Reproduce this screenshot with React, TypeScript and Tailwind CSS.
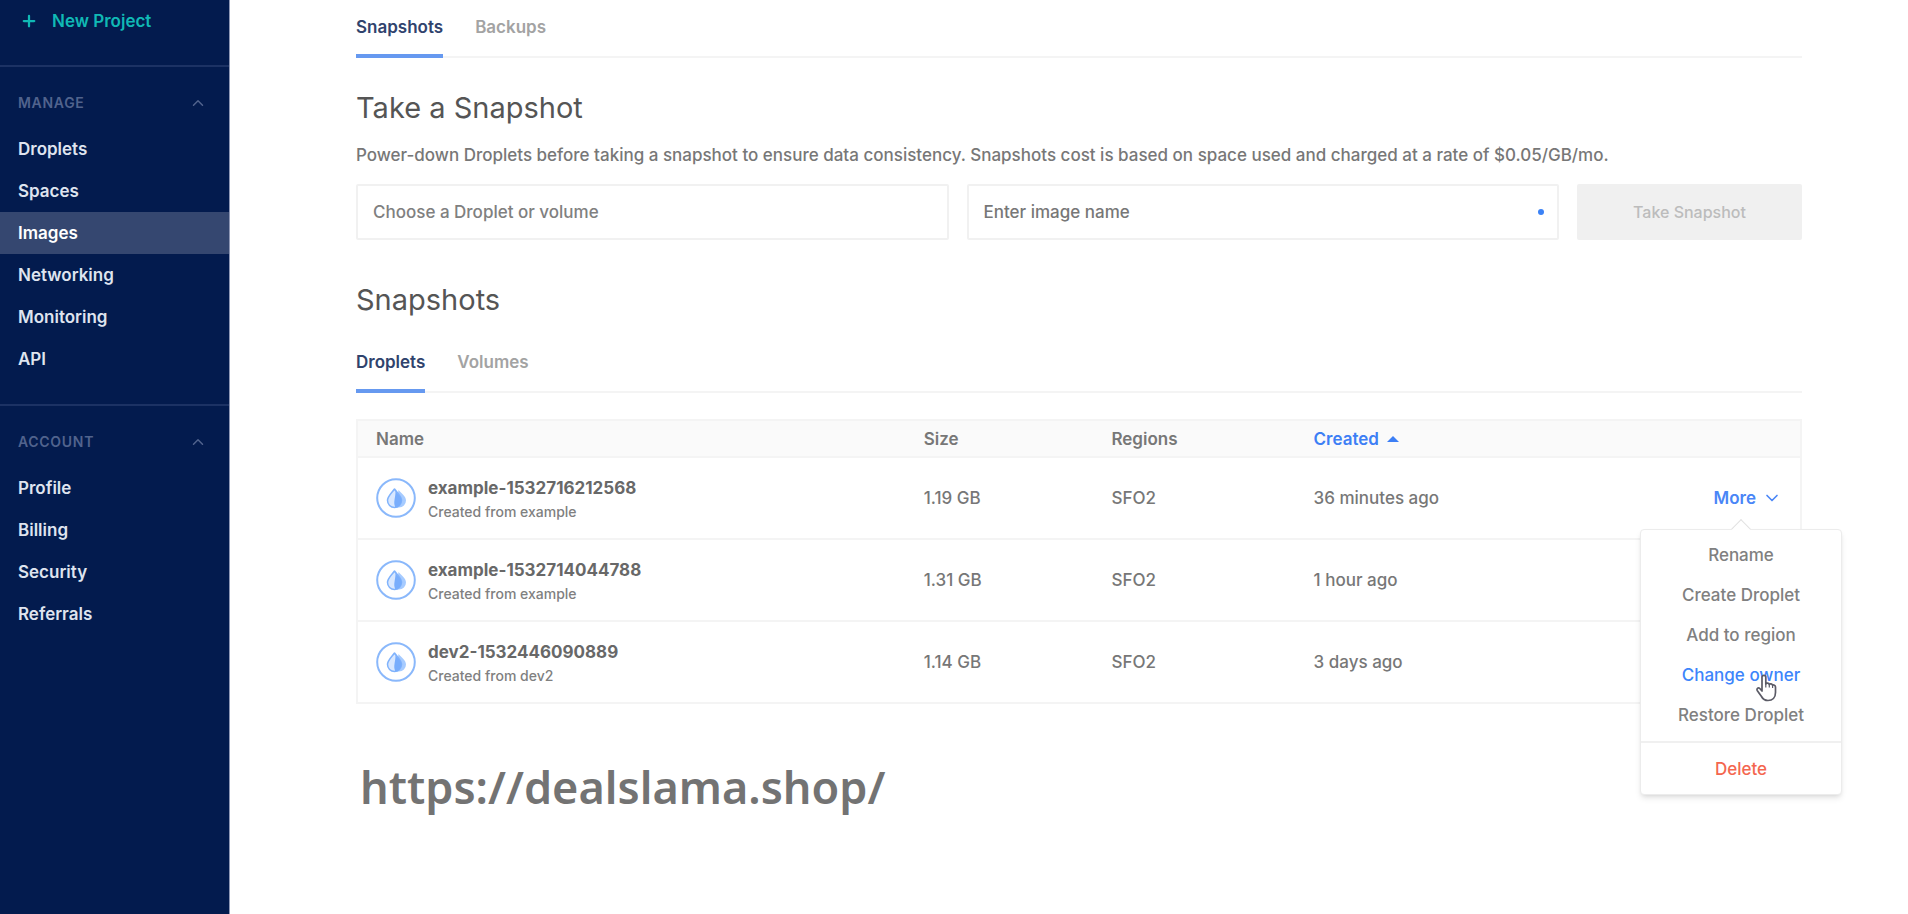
import React, { useState } from 'react';
import { ChevronDown, ChevronUp, Plus } from 'lucide-react';

interface Snapshot {
    name: string;
    source: string;
    size: string;
    region: string;
    created: string;
}

interface TabsProps {
    label: string;
    tabs: string[];
    className: string;
}

interface SectionProps {
    title: string;
    items: string[];
    active?: string;
}

const snapshots: Snapshot[] = [
    { name: 'example-1532716212568', source: 'example', size: '1.19 GB', region: 'SFO2', created: '36 minutes ago' },
    { name: 'example-1532714044788', source: 'example', size: '1.31 GB', region: 'SFO2', created: '1 hour ago' },
    { name: 'dev2-1532446090889', source: 'dev2', size: '1.14 GB', region: 'SFO2', created: '3 days ago' }
];

const menuItems = ['Rename', 'Create Droplet', 'Add to region', 'Change owner', 'Restore Droplet'];

const DropletIcon = () => (
    <svg width="40" height="40" viewBox="0 0 40 40" fill="none" aria-hidden="true" className="shrink-0">
        <circle cx="20" cy="20" r="18.8" stroke="#8ab8fb" strokeWidth="2" />
        <path d="M22.500 12c3 3.200 7.500 6.500 7.500 10.500a7 7 0 0 1-7 7h-3Z" fill="#a6cbff" />
        <path d="M18.500 11c-2.700 3.900-7 7.300-7 11.500a7 7 0 0 0 14 0c0-4.200-4.300-7.600-7-11.500Z" fill="#d9e8ff" stroke="#80b3fc" strokeWidth="1.500" strokeLinejoin="round" />
        <path d="M19.500 13c2.700 3.500 6 6 6 9.600a6.800 6.800 0 0 1-6.200 6.800c-1-2.500-1.300-4.400-.8-7.400.4-3 1-5 1-9Z" fill="#78adfc" />
    </svg>
);

const HandCursor = () => (
    <svg
        width="24"
        height="30"
        viewBox="0 0 24 30"
        aria-hidden="true"
        className="pointer-events-none absolute left-[113px] top-[143px]"
    >
        <path
            d="M8 18V4.200a1.900 1.900 0 0 1 3.800 0V11c.5-1.300 3.200-1.200 3.500.500.700-1 3-.8 3.300.8.900-.7 2.900-.2 2.900 1.700v5.500c0 5-3 8-7.500 8-3.500 0-5.200-1.500-6.500-4L3.200 17.500c-1-2 1.200-3.300 2.600-2Z"
            fill="#ffffff"
            stroke="#5b5b66"
            strokeWidth="1.700"
            strokeLinejoin="round"
        />
        <path d="M11.800 10.500v4M15.300 11.500v3M18.600 12.500v2.500" stroke="#5b5b66" strokeWidth="1.200" />
    </svg>
);

const Tabs: React.FC<TabsProps> = ({ label, tabs, className }) => {
    const [current, setCurrent] = useState(tabs[0]);

    return (
        <nav aria-label={label} className={`flex gap-8 border-b-2 border-[#f4f4f4] ${className}`}>
            {tabs.map(tab => (
                <button
                    key={tab}
                    onClick={() => setCurrent(tab)}
                    className={`-mb-[2px] border-b-4 pb-[15px] text-[17px] leading-6 font-semibold ${tab === current
                            ? 'border-[#6699f0] text-[#30436d]'
                            : 'border-transparent text-[#a3a3a3]'
                        }`}
                >
                    {tab}
                </button>
            ))}
        </nav>
    );
};

const SidebarSection: React.FC<SectionProps> = ({ title, items, active }) => (
    <section className="border-t-2 border-[#1c3264] pt-6 pb-6">
        <button className="flex h-6 w-full items-center justify-between pr-[22px] pl-[18px] text-sm font-semibold tracking-wider text-[#51638d]">
            {title}
            <ChevronUp size={18} strokeWidth={2} />
        </button>
        <ul className="mt-[13px]">
            {items.map(item => (
                <li key={item}>
                    <a
                        href="#"
                        className={`flex h-[42px] items-center pl-[18px] text-[17px] font-semibold ${item === active ? 'bg-[#354770] text-white' : 'text-[#dfe4ef]'
                            }`}
                    >
                        {item}
                    </a>
                </li>
            ))}
        </ul>
    </section>
);

const MoreMenu = () => (
    <div className="absolute top-[71px] right-[-42px] z-10 w-[202px] rounded-sm border border-[#ececec] bg-white text-center font-medium text-[#808080] shadow-md">
        <span className="absolute -top-[8px] left-1/2 -ml-[7px] h-[14px] w-[14px] rotate-45 border-t border-l border-[#e2e2e2] bg-white" />
        <ul className="pt-[5px] pb-[6px]">
            {menuItems.map(item => (
                <li key={item}>
                    <button className={`h-10 w-full ${item === 'Change owner' ? 'text-[#3d85fb]' : ''}`}>{item}</button>
                </li>
            ))}
        </ul>
        <div className="border-t-2 border-[#f0f0f0]">
            <button className="h-[51px] w-full text-[#f4664f]">Delete</button>
        </div>
        <HandCursor />
    </div>
);

const App: React.FC = () => {
    const [menuRow, setMenuRow] = useState<number | null>(0);

    return (
        <div className="flex min-h-screen bg-white font-['Inter',sans-serif] text-[17px] leading-6 text-[#777777]">
            <aside className="w-[230px] shrink-0 border-r border-[#8f98b5] bg-[#031b4e]">
                <button className="flex h-[65px] w-full items-start gap-[14px] pt-[9px] pl-5 font-semibold text-[#10b9b5]">
                    <Plus size={18} strokeWidth={3} className="mt-[3px]" />
                    New Project
                </button>
                <SidebarSection
                    title="MANAGE"
                    items={['Droplets', 'Spaces', 'Images', 'Networking', 'Monitoring', 'API']}
                    active="Images"
                />
                <SidebarSection title="ACCOUNT" items={['Profile', 'Billing', 'Security', 'Referrals']} />
            </aside>

            <main className="min-w-0 flex-1 pr-[106px] pl-[126px]">
                <Tabs label="Images" tabs={['Snapshots', 'Backups']} className="pt-[15px]" />

                <h2 className="mt-8 text-[29px] leading-9 text-[#555555]">Take a Snapshot</h2>
                <p className="mt-[17px] font-medium">
                    Power-down Droplets before taking a snapshot to ensure data consistency. Snapshots cost is based on space used and charged at a rate of $0.05/GB/mo.
                </p>

                <form className="mt-[17px] flex gap-[18px]" onSubmit={e => e.preventDefault()}>
                    <div className="min-w-0 flex-1">
                        <select
                            aria-label="Choose a Droplet or volume"
                            className="h-14 w-full appearance-none rounded-xs border-2 border-[#f1f1f1] bg-white px-[15px] font-medium text-[#808080]"
                        >
                            <option>Choose a Droplet or volume</option>
                        </select>
                    </div>
                    <div className="relative min-w-0 flex-1">
                        <input
                            aria-label="Enter image name"
                            placeholder="Enter image name"
                            className="h-14 w-full rounded-xs border-2 border-[#f1f1f1] px-[15px] font-medium placeholder:text-[#777777]"
                        />
                        <span className="absolute top-[25px] right-[15px] h-[6px] w-[6px] rounded-full bg-[#3b82f6]" />
                    </div>
                    <button disabled className="h-14 w-[225px] rounded-xs bg-[#f0f0f0] text-base font-medium text-[#bcbcbc]">
                        Take Snapshot
                    </button>
                </form>

                <h2 className="mt-[42px] text-[29px] leading-9 text-[#555555]">Snapshots</h2>
                <Tabs label="Snapshot type" tabs={['Droplets', 'Volumes']} className="pt-8" />

                <table className="mt-[26px] w-full table-fixed border-collapse border-2 border-[#f4f4f4] text-left font-medium">
                    <colgroup>
                        <col className="w-[38%]" />
                        <col className="w-[13%]" />
                        <col className="w-[14%]" />
                        <col className="w-[22%]" />
                        <col />
                    </colgroup>
                    <thead>
                        <tr className="h-[37px] border-b-2 border-[#f4f4f4] bg-[#fafafa]">
                            <th className="pl-[18px] font-semibold">Name</th>
                            <th className="pl-[18px] font-semibold">Size</th>
                            <th className="pl-[18px] font-semibold">Regions</th>
                            <th className="pl-[18px] font-semibold text-[#3d7ff5]">
                                <button className="flex items-center gap-2">
                                    Created
                                    <svg width="12" height="6" viewBox="0 0 12 6" fill="currentColor" aria-hidden="true">
                                        <path d="M6 0l6 6H0Z" />
                                    </svg>
                                </button>
                            </th>
                            <th />
                        </tr>
                    </thead>
                    <tbody>
                        {snapshots.map((snapshot, index) => (
                            <tr key={snapshot.name} className="h-[82px] border-b-2 border-[#f4f4f4]">
                                <td className="pl-[18px]">
                                    <div className="flex items-center gap-3">
                                        <DropletIcon />
                                        <div className="pt-1">
                                            <p className="font-bold text-[#686868]">{snapshot.name}</p>
                                            <p className="text-sm leading-6 font-medium text-[#808080]">Created from {snapshot.source}</p>
                                        </div>
                                    </div>
                                </td>
                                <td className="pl-[18px]">{snapshot.size}</td>
                                <td className="pl-[18px]">{snapshot.region}</td>
                                <td className="pl-[18px]">{snapshot.created}</td>
                                <td className="relative pr-[18px]">
                                    {menuRow === index && (
                                        <>
                                            <button
                                                onClick={() => setMenuRow(null)}
                                                className="ml-auto flex items-center gap-[6px] font-semibold text-[#4a86f7]"
                                            >
                                                More
                                                <ChevronDown size={20} />
                                            </button>
                                            <MoreMenu />
                                        </>
                                    )}
                                </td>
                            </tr>
                        ))}
                    </tbody>
                </table>

                <a
                    href="https://dealslama.shop/"
                    className="mt-[53px] ml-1 inline-block font-['Noto_Sans','Open_Sans',sans-serif] text-[45px] leading-[60px] font-semibold text-[#737373]"
                >
                    https://dealslama.shop/
                </a>
            </main>
        </div>
    );
};

export default App;
